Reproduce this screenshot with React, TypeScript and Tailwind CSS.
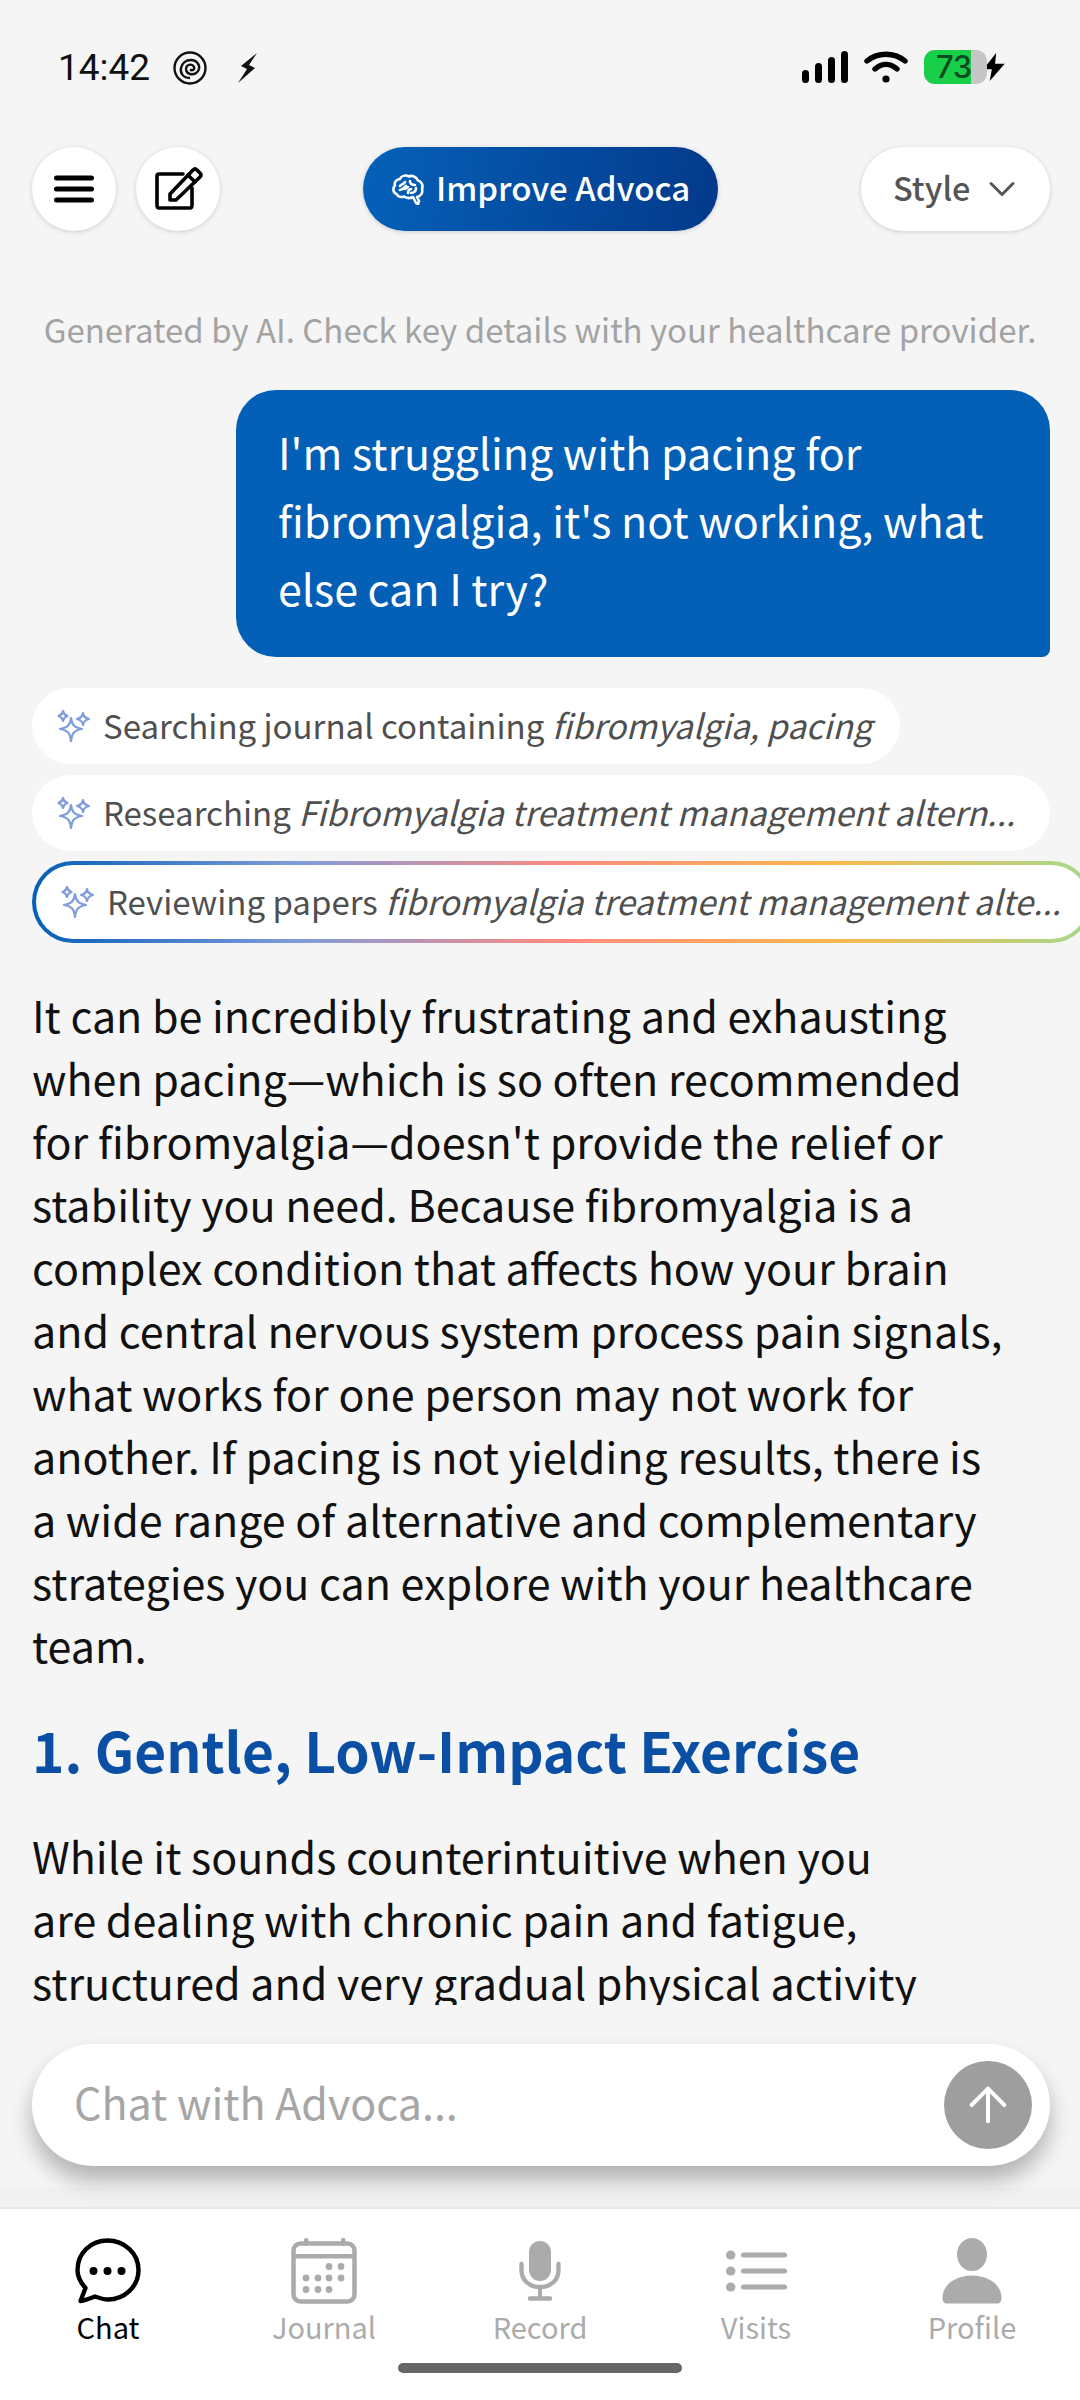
import { ReactNode } from "react";
import { ArrowUp, ChevronDown } from "lucide-react";

const FONT = "font-['Noto_Sans_CJK_JP','Noto_Sans',sans-serif]";

function Sparkles({ className }: { className?: string }) {
  return (
    <svg viewBox="0 0 34 32" className={className} fill="none" stroke="#7f9cdb" strokeWidth="2.2" strokeLinejoin="round">
      <path d="M14 8 C15 15 17 17.500 25 19 C17 20.500 15 23 14 31 C13 23 11 20.500 3 19 C11 17.500 13 15 14 8 Z" />
      <path d="M6 1 C6.500 4 7.500 5 10.500 6 C7.500 7 6.500 8 6 11 C5.500 8 4.500 7 1.500 6 C4.500 5 5.500 4 6 1 Z" />
      <path d="M26 3 C26.500 6.500 28 8 32 9 C28 10 26.500 11.500 26 15 C25.500 11.500 24 10 20 9 C24 8 25.500 6.500 26 3 Z" />
    </svg>
  );
}

function StatusBar() {
  return (
    <div className="flex h-[147px] shrink-0 items-start justify-between pl-[58px] pr-[73px] pt-[50px]">
      <div className="flex items-center">
        <span className="font-['Roboto',sans-serif] text-[37px] leading-[36px] text-[#111]">14:42</span>
        <svg viewBox="0 0 34 34" className="ml-[23px] h-[34px] w-[34px]" fill="none" stroke="#111" strokeWidth="2.400">
          <circle cx="17" cy="17" r="15.500" />
          <path d="M17 27 C10 27 7 22 8 17 C9 12 13 9 18 9 C23 9 27 13 26 18 C25 22 21 24 17 23 C13 22 12 18 14 15 C16 13 20 13 21 16 C22 19 19 20 17 18.500" />
        </svg>
        <svg viewBox="0 0 22 30" className="ml-[30px] h-[30px] w-[22px]" fill="#111">
          <path d="M20 0 L4 13 L10 16 L1 30 L18 15 L12 12 Z" />
        </svg>
      </div>
      <div className="flex items-center">
        <svg viewBox="0 0 46 32" className="h-[32px] w-[46px]" fill="#000">
          <rect x="0" y="19" width="7" height="13" rx="3.500" />
          <rect x="13" y="12" width="7" height="20" rx="3.500" />
          <rect x="26" y="6" width="7" height="26" rx="3.500" />
          <rect x="39" y="0" width="7" height="32" rx="3.500" />
        </svg>
        <svg viewBox="0 0 44 32" className="ml-[16px] h-[32px] w-[44px]" fill="none" stroke="#000" strokeWidth="5.400" strokeLinecap="round">
          <path d="M3 10 C14 1 30 1 41 10" />
          <path d="M11 18 C18 12 26 12 33 18" />
          <circle cx="22" cy="28" r="3.600" fill="#000" stroke="none" />
        </svg>
        <div className="relative ml-[16px] flex h-[34px] w-[63px] rounded-[11px] bg-[#c6c6c6]">
          <div className="h-full w-[47px] rounded-l-[11px] bg-[#19cf4a]" />
          <span className="absolute left-[12px] top-0 font-['Inter',sans-serif] text-[31px] font-medium leading-[34px] tracking-[-0.5px] text-[#0b4a22]">73</span>
        </div>
        <svg viewBox="-1 -1 24 28" className="-ml-[6px] h-[30px] w-[26px]" fill="#000" stroke="#f5f5f5" strokeWidth="2.500" paintOrder="stroke">
          <path d="M13 0 L1 15 L9 15 L7 26 L21 10 L12 10 Z" />
        </svg>
      </div>
    </div>
  );
}

function TopBar() {
  return (
    <div className="flex h-[84px] shrink-0 items-center justify-between pl-[32px] pr-[30px]">
      <div className="flex gap-[20px]">
        <button className="flex h-[84px] w-[84px] items-center justify-center rounded-full bg-white shadow-[0_1px_5px_rgba(0,0,0,0.16)]">
          <svg viewBox="0 0 40 28" className="h-[28px] w-[40px]" stroke="#000" strokeWidth="5" strokeLinecap="round">
            <path d="M2.500 3 H37.500 M2.500 14 H37.500 M2.500 25 H37.500" />
          </svg>
        </button>
        <button className="flex h-[84px] w-[84px] items-center justify-center rounded-full bg-white shadow-[0_1px_5px_rgba(0,0,0,0.16)]">
          <svg viewBox="0 0 48 44" className="ml-[2px] h-[44px] w-[48px]" fill="none" stroke="#000" strokeWidth="3.600" strokeLinejoin="round" strokeLinecap="round">
            <path d="M28 7 H4 Q2 7 2 9 V38 Q2 41 4 41 H35 Q37 41 37 38 V21" />
            <path d="M15 27 L15 33 L21 33 L45 10 Q47 8 45 6 L42 3 Q40 1 38 3 Z" />
            <path d="M33 8 L40 15" />
          </svg>
        </button>
      </div>
      <button className="flex h-[84px] w-[355px] items-center gap-[12px] rounded-full bg-[linear-gradient(100deg,#0561b9,#03398a)] pl-[29px] shadow-[0_1px_5px_rgba(0,0,0,0.16)]">
        <svg viewBox="0 0 32 31" className="h-[31px] w-[32px]" fill="none" stroke="#fff" strokeWidth="2.600" strokeLinejoin="round" strokeLinecap="round">
          <path d="M24 29 L26 30 L27 27 L25 23 C29 22 31 19 30 15 C31.500 11 29 7 26 6.500 C24 2.500 20 1 17 2.500 C13 0.500 9 2 8 5 C4 5.500 2 8.500 3 11.500 C0.500 14 1 19 4.500 20 C6 23 9.500 23.500 12 22.500 C15 24.500 19 24 21 23 Z" />
          <path d="M8 12 C10 10 12 10 13 8 M14 12 C12 14 11 16 8 16 M18 7 C18 10 20 11 23 11 M19 15 C17 15 16 17 16 19 M24 14 C24 17 22 19 19 19 M13 15 L16 13" />
        </svg>
        <span className="mb-[3px] text-[33px] font-medium text-white">Improve Advoca</span>
      </button>
      <button className="flex h-[84px] w-[189px] items-center gap-[10px] rounded-full bg-white pl-[32px] shadow-[0_1px_5px_rgba(0,0,0,0.16)]">
        <span className="mb-[3px] text-[32.5px] font-medium text-[#555]">Style</span>
        <ChevronDown size={44} strokeWidth={1.6} color="#555" />
      </button>
    </div>
  );
}

function Chip({ children, width }: { children: ReactNode; width: string }) {
  return (
    <div className={`flex h-[76px] items-center rounded-full bg-white pl-[25px] ${width}`}>
      <Sparkles className="h-[32px] w-[34px] shrink-0" />
      <span className="mb-[2px] ml-[12px] whitespace-nowrap text-[33px] leading-[74px] text-[#4f4f4f]">{children}</span>
    </div>
  );
}

function Conversation() {
  return (
    <div className="relative min-h-0 flex-1 overflow-hidden pl-[32px]">
      <p className="-ml-[32px] pt-[76px] text-center text-[33px] leading-[44px] text-[#a3a3a3]">
        Generated by AI. Check key details with your healthcare provider.
      </p>
      <div className="ml-auto mr-[30px] mt-[39px] w-[814px] rounded-[40px] rounded-br-[8px] bg-[#045fb7] px-[42px] pb-[36px] pt-[27px] text-[43px] leading-[68px] text-white">
        I'm struggling with pacing for
        <br />
        fibromyalgia, it's not working, what
        <br />
        else can I try?
      </div>
      <div className="mt-[31px] flex flex-col">
        <Chip width="w-[868px]">
          Searching journal containing <em className="text-[33.7px]">fibromyalgia, pacing</em>
        </Chip>
        <div className="mt-[11px]">
          <Chip width="w-[1018px]">
            Researching <em className="text-[33.7px]">Fibromyalgia treatment management altern...</em>
          </Chip>
        </div>
        <div className="mt-[10px] h-[82px] w-[1060px] rounded-full bg-[linear-gradient(90deg,#045fb7_0%,#7f9cdb_25%,#ff8a80_50%,#ffb74d_75%,#a5d98a_100%)] p-[4px]">
          <div className="flex h-full items-center rounded-full bg-white pl-[25px]">
            <Sparkles className="h-[32px] w-[34px] shrink-0" />
            <span className="mb-[2px] ml-[12px] whitespace-nowrap text-[33px] leading-[74px] text-[#4f4f4f]">
              Reviewing papers <em className="text-[33.7px]">fibromyalgia treatment management alte...</em>
            </span>
          </div>
        </div>
      </div>
      <p className="mt-[40px] text-[43px] leading-[63px] text-[#111]">
        It can be incredibly frustrating and exhausting
        <br />
        when pacing—which is so often recommended
        <br />
        for fibromyalgia—doesn't provide the relief or
        <br />
        stability you need. Because fibromyalgia is a
        <br />
        complex condition that affects how your brain
        <br />
        and central nervous system process pain signals,
        <br />
        what works for one person may not work for
        <br />
        another. If pacing is not yielding results, there is
        <br />
        a wide range of alternative and complementary
        <br />
        strategies you can explore with your healthcare
        <br />
        team.
      </p>
      <h2 className="mt-[37px] text-[55px] font-semibold leading-[72px] text-[#0a4fa3]">1. Gentle, Low-Impact Exercise</h2>
      <p className="mt-[39px] text-[43px] leading-[63px] text-[#111]">
        While it sounds counterintuitive when you
        <br />
        are dealing with chronic pain and fatigue,
        <br />
        structured and very gradual physical activity
      </p>
    </div>
  );
}

function Composer() {
  return (
    <div className="flex h-[202px] shrink-0 flex-col bg-[linear-gradient(#f5f5f5_0,#f5f5f5_182px,#f1f1f1_183px)] pl-[32px] pr-[30px] pt-[39px]">
      <div className="flex h-[122px] items-center justify-between rounded-full bg-white pl-[42px] pr-[18px] shadow-[0_14px_22px_rgba(0,0,0,0.28)]">
        <span className="mb-[8px] text-[43px] leading-[60px] text-[#a6a6a6]">Chat with Advoca...</span>
        <div className="flex h-[88px] w-[88px] items-center justify-center rounded-full bg-[#9e9e9e]">
          <ArrowUp size={56} strokeWidth={1.7} color="#fff" />
        </div>
      </div>
    </div>
  );
}

function NavItem({ label, active, icon }: { label: string; active?: boolean; icon: ReactNode }) {
  return (
    <div className="flex flex-1 flex-col items-center">
      <div className="flex h-[70px] items-center justify-center">{icon}</div>
      <span className={`-mt-[1px] text-[29px] leading-[42px] ${active ? "text-black" : "text-[#ababab]"}`}>{label}</span>
    </div>
  );
}

function BottomNav() {
  return (
    <div className="relative flex h-[193px] shrink-0 items-start border-t-2 border-[#e8e8e8] bg-white pt-[27px]">
      <NavItem
        label="Chat"
        active
        icon={
          <svg viewBox="0 0 66 66" className="h-[66px] w-[66px]" fill="none" stroke="#000" strokeWidth="4.400" strokeLinejoin="round">
            <path d="M5.500 63 L10.500 50 C5 44 2.500 38 2.500 32 C2.500 15 16 2.500 32.500 2.500 C49 2.500 63.500 15 63.500 32 C63.500 49 49 61.500 33 61.500 C28 61.500 24 60 20 58.500 C15 60.500 10 62.500 5.500 63 Z" />
            <circle cx="18.500" cy="33" r="4" fill="#000" stroke="none" />
            <circle cx="32.500" cy="33" r="4" fill="#000" stroke="none" />
            <circle cx="46.500" cy="33" r="4" fill="#000" stroke="none" />
          </svg>
        }
      />
      <NavItem
        label="Journal"
        icon={
          <svg viewBox="0 0 66 66" className="h-[66px] w-[66px]" fill="#ababab">
            <rect x="2.500" y="5.500" width="61" height="58" rx="7" fill="none" stroke="#ababab" strokeWidth="4.500" />
            <rect x="2.500" y="16" width="61" height="4.500" />
            <rect x="13" y="0" width="4.500" height="8" rx="2" />
            <rect x="50" y="0" width="4.500" height="8" rx="2" />
            {[[38, 28.500], [50, 28.500], [15, 40], [27, 40], [38, 40], [50, 40], [15, 51.500], [27, 51.500], [38, 51.500]].map(([cx, cy]) => (
              <circle key={`${cx}-${cy}`} cx={cx} cy={cy} r="3.400" />
            ))}
          </svg>
        }
      />
      <NavItem
        label="Record"
        icon={
          <svg viewBox="0 0 42 60" className="h-[60px] w-[42px]" fill="none" stroke="#ababab">
            <rect x="10" y="0" width="22" height="40" rx="11" fill="#ababab" stroke="none" />
            <path d="M2.500 23 V29 C2.500 39 10 46 21 46 C32 46 39.500 39 39.500 29 V23" strokeWidth="4.400" strokeLinecap="round" />
            <path d="M21 46 V57" strokeWidth="4" />
            <path d="M11 57.500 H31" strokeWidth="4.500" strokeLinecap="round" />
          </svg>
        }
      />
      <NavItem
        label="Visits"
        icon={
          <svg viewBox="0 0 61 42" className="h-[42px] w-[61px]" fill="#ababab">
            <ellipse cx="4.700" cy="5" rx="4.700" ry="4.600" />
            <ellipse cx="4.700" cy="21" rx="4.700" ry="4.600" />
            <ellipse cx="4.700" cy="37" rx="4.700" ry="4.600" />
            <rect x="15" y="2.500" width="46" height="5" rx="2.500" />
            <rect x="15" y="18.500" width="46" height="5" rx="2.500" />
            <rect x="15" y="34.500" width="46" height="5" rx="2.500" />
          </svg>
        }
      />
      <NavItem
        label="Profile"
        icon={
          <svg viewBox="0 0 60 66" className="h-[66px] w-[60px]" fill="#ababab">
            <ellipse cx="30" cy="16.500" rx="15" ry="16.500" />
            <path d="M0.500 60 C0.500 47 13 37.500 30 37.500 C47 37.500 59.500 47 59.500 60 C59.500 64 57.500 65.500 55 65.500 H5 C2.500 65.500 0.500 64 0.500 60 Z" />
          </svg>
        }
      />
      <div className="absolute bottom-[27px] left-[398px] h-[10px] w-[284px] rounded-full bg-[#666]" />
    </div>
  );
}

export default function App() {
  return (
    <div className={`flex h-[2400px] w-[1080px] flex-col overflow-hidden bg-[#f5f5f5] ${FONT}`}>
      <StatusBar />
      <TopBar />
      <Conversation />
      <Composer />
      <BottomNav />
    </div>
  );
}
